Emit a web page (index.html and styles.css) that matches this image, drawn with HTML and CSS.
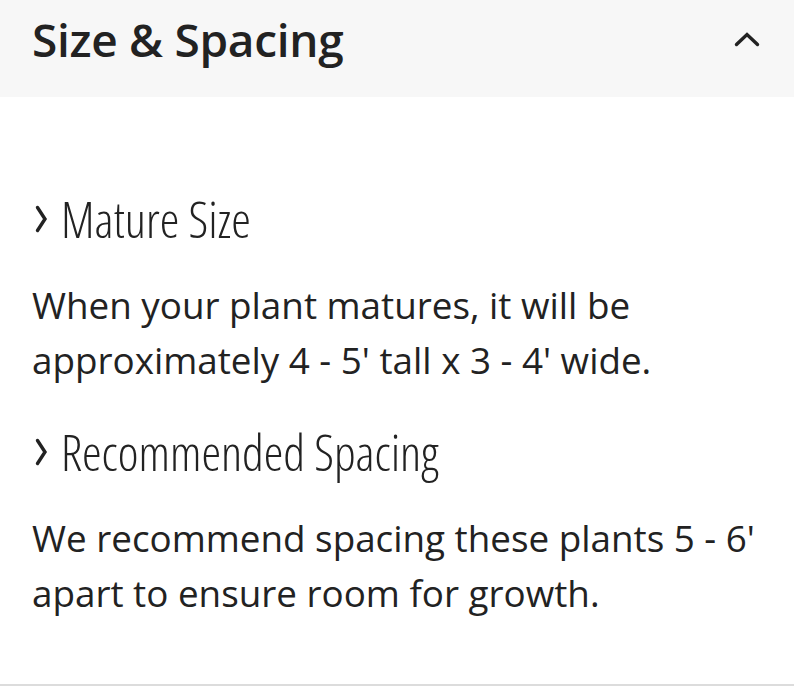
FILE: index.html
```html
<!DOCTYPE html>
<html lang="en">
<head>
<meta charset="utf-8">
<title>Size &amp; Spacing</title>
<link rel="stylesheet" href="styles.css">
</head>
<body>
<section class="panel">
  <header class="panel-head">
    <h2 class="panel-title">Size &amp; Spacing</h2>
    <svg class="chev-up" width="26" height="16" viewBox="0 0 26 16" aria-hidden="true">
      <path d="M2.5 13.5 L13 3.5 L23.5 13.5" fill="none" stroke="#222" stroke-width="3.4" stroke-linecap="round" stroke-linejoin="miter"/>
    </svg>
  </header>
  <div class="panel-body">
    <h3 class="sub">
      <svg class="chev-right" width="13" height="30" viewBox="0 0 13 30" aria-hidden="true">
        <path d="M2.5 3.5 L10 15 L2.5 26.5" fill="none" stroke="#222" stroke-width="3.4" stroke-linecap="round"/>
      </svg>
      <span>Mature Size</span>
    </h3>
    <p class="text">When your plant matures, it will be approximately 4 - 5' tall x 3 - 4' wide.</p>
    <h3 class="sub">
      <svg class="chev-right" width="13" height="30" viewBox="0 0 13 30" aria-hidden="true">
        <path d="M2.5 3.5 L10 15 L2.5 26.5" fill="none" stroke="#222" stroke-width="3.4" stroke-linecap="round"/>
      </svg>
      <span>Recommended Spacing</span>
    </h3>
    <p class="text">We recommend spacing these plants 5 - 6' apart to ensure room for growth.</p>
  </div>
</section>
</body>
</html>
```

FILE: styles.css
```css
html, body {
  margin: 0;
  padding: 0;
  background: #ffffff;
}

body {
  width: 794px;
  height: 686px;
  overflow: hidden;
  font-family: "Open Sans", "Liberation Sans", sans-serif;
  color: #222222;
}

.panel {
  height: 686px;
  box-sizing: border-box;
  border-bottom: 2px solid #dcdcdc;
  display: flex;
  flex-direction: column;
}

.panel-head {
  height: 97px;
  flex: none;
  background: #f7f7f7;
  display: flex;
  align-items: center;
  justify-content: space-between;
  padding: 0 34px 0 32px;
  box-sizing: border-box;
}

.panel-title {
  margin: 0;
  font-size: 46px;
  font-weight: 600;
  line-height: 1;
  color: #222222;
  letter-spacing: -0.3px;
  padding-bottom: 20px;
}

.chev-up {
  display: block;
  margin-bottom: 20px;
}

.panel-body {
  padding: 92px 32px 0 32px;
}

.sub {
  margin: 0;
  display: flex;
  align-items: center;
  gap: 13px;
  font-size: 49.5px;
  font-weight: 300;
  font-stretch: 75%;
  line-height: 60px;
  color: #222222;
}

.chev-right {
  display: block;
  margin-left: 3px;
}

.text {
  margin: 29px 0 34px 0;
  font-size: 36.8px;
  font-weight: 400;
  line-height: 55px;
  color: #222222;
}
```
